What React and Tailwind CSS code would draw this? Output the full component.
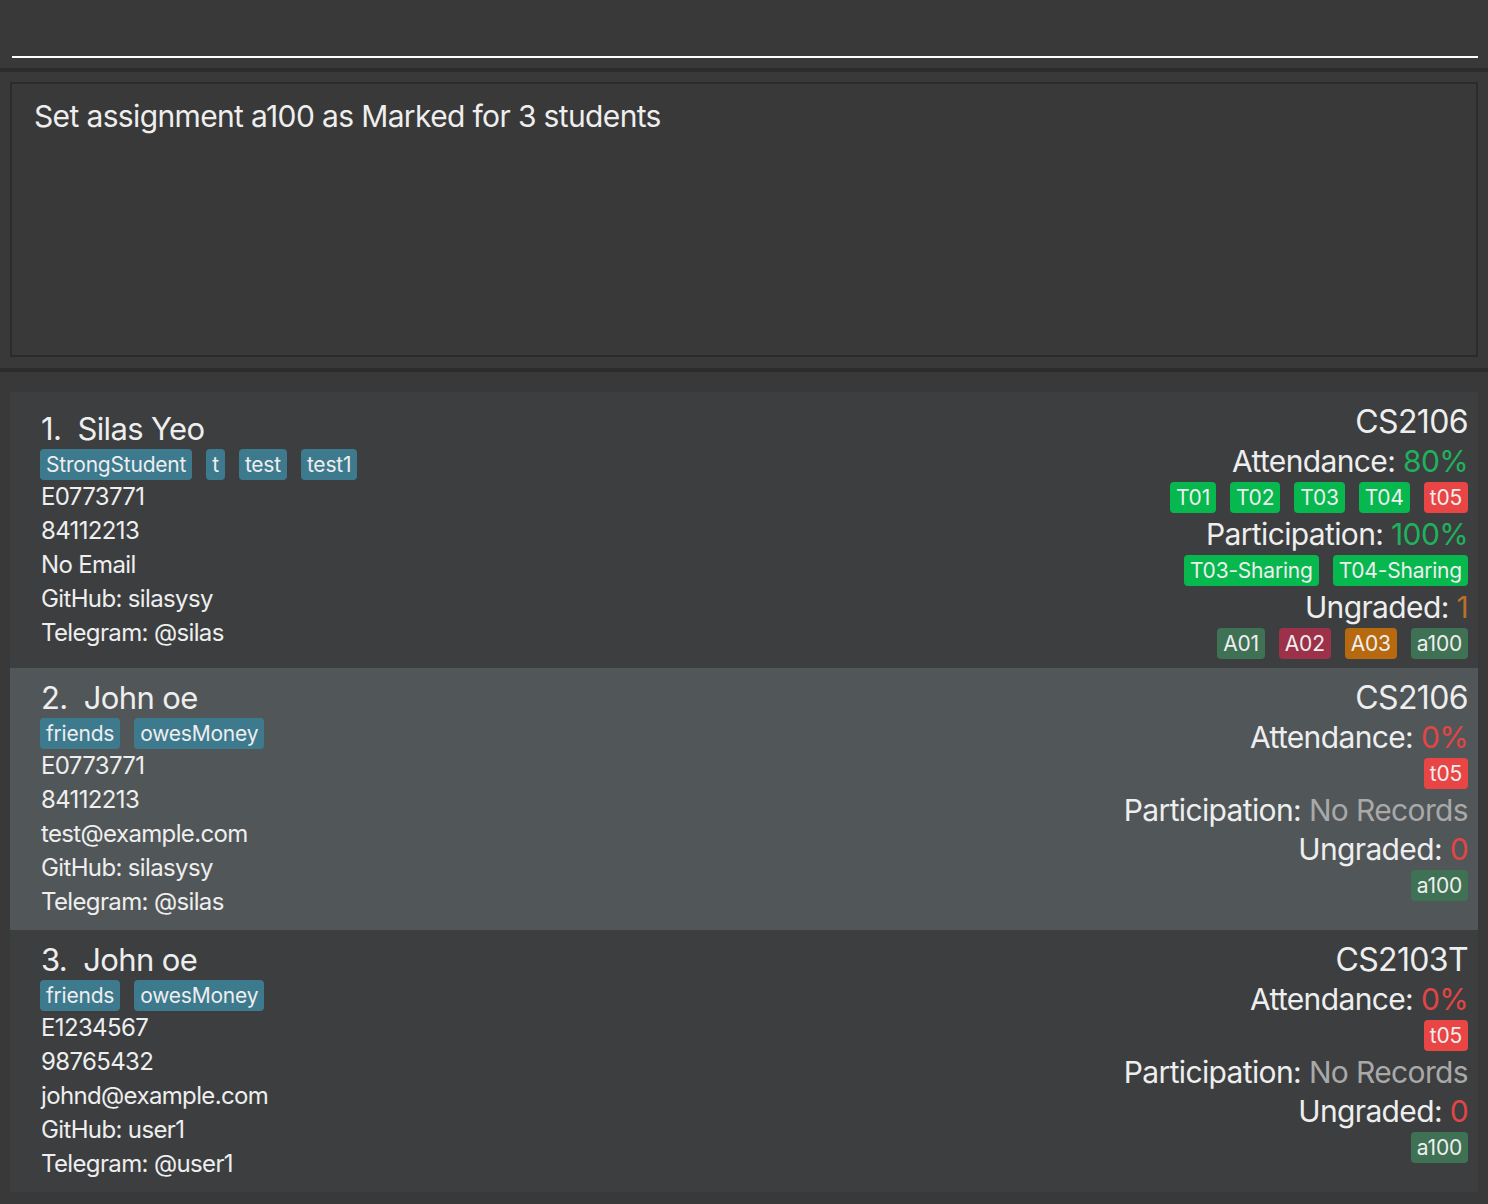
import React from "react";

const students = [
  {
    name: "Silas Yeo",
    tags: ["StrongStudent", "t", "test", "test1"],
    id: "E0773771",
    phone: "84112213",
    email: "No Email",
    github: "silasysy",
    telegram: "@silas",
    course: "CS2106",
    attendance: { value: "80%", good: true },
    attTags: [
      { label: "T01", ok: true },
      { label: "T02", ok: true },
      { label: "T03", ok: true },
      { label: "T04", ok: true },
      { label: "t05", ok: false },
    ],
    participation: { value: "100%", good: true },
    partTags: ["T03-Sharing", "T04-Sharing"],
    ungraded: { value: "1", color: "text-[#b8702a]" },
    assignments: [
      { label: "A01", cls: "bg-[#3f7154]" },
      { label: "A02", cls: "bg-[#9c3149]" },
      { label: "A03", cls: "bg-[#b7690f]" },
      { label: "a100", cls: "bg-[#3f7154]" },
    ],
  },
  {
    name: "John oe",
    tags: ["friends", "owesMoney"],
    id: "E0773771",
    phone: "84112213",
    email: "test@example.com",
    github: "silasysy",
    telegram: "@silas",
    course: "CS2106",
    attendance: { value: "0%", good: false },
    attTags: [{ label: "t05", ok: false }],
    participation: null,
    partTags: [],
    ungraded: { value: "0", color: "text-[#e24545]" },
    assignments: [{ label: "a100", cls: "bg-[#3f7154]" }],
  },
  {
    name: "John oe",
    tags: ["friends", "owesMoney"],
    id: "E1234567",
    phone: "98765432",
    email: "johnd@example.com",
    github: "user1",
    telegram: "@user1",
    course: "CS2103T",
    attendance: { value: "0%", good: false },
    attTags: [{ label: "t05", ok: false }],
    participation: null,
    partTags: [],
    ungraded: { value: "0", color: "text-[#e24545]" },
    assignments: [{ label: "a100", cls: "bg-[#3f7154]" }],
  },
];

const Tag = ({ children, className }) => (
  <span
    className={`h-[31px] px-[6px] rounded-[4px] text-[21px] leading-[31px] tracking-[-0.01em] text-[#eeeeee] ${className}`}
  >
    {children}
  </span>
);

const StudentCard = ({ s, index }) => {
  const even = index % 2 === 1;
  return (
    <div
      className={`flex justify-between pt-3 pb-[9px] pl-[31px] pr-[10px] ${
        even ? "bg-[#515658]" : "bg-[#3c3e40]"
      }`}
    >
      {/* LEFT: details */}
      <div className="self-center flex flex-col pb-[2px] text-[#eeeeee]">
        <div className="text-[31px] leading-[36px] whitespace-pre">
          {index + 1}.  {s.name}
        </div>
        <div className="flex gap-[14px] mt-[2px] -ml-[1px]">
          {s.tags.map((t) => (
            <Tag key={t} className="bg-[#3d7a8e]">
              {t}
            </Tag>
          ))}
        </div>
        <div className="text-[24px] leading-[34px]">
          <div>{s.id}</div>
          <div>{s.phone}</div>
          <div>{s.email}</div>
          <div>GitHub: {s.github}</div>
          <div>Telegram: {s.telegram}</div>
        </div>
      </div>

      {/* RIGHT: course stats */}
      <div className="self-start flex flex-col items-end gap-[3px] text-[#eeeeee] text-[30px] leading-[36px]">
        <div className="text-[32px]">{s.course}</div>
        <div>
          Attendance:{" "}
          <span className={s.attendance.good ? "text-[#1fb25c]" : "text-[#e24545]"}>
            {s.attendance.value}
          </span>
        </div>
        <div className="flex gap-[14px]">
          {s.attTags.map((t) => (
            <Tag key={t.label} className={t.ok ? "bg-[#06b84e]" : "bg-[#ea4545]"}>
              {t.label}
            </Tag>
          ))}
        </div>
        <div>
          Participation:{" "}
          {s.participation ? (
            <span className="text-[#1fb25c]">{s.participation.value}</span>
          ) : (
            <span className="text-[#a9a9a9]">No Records</span>
          )}
        </div>
        {s.partTags.length > 0 && (
          <div className="flex gap-[14px]">
            {s.partTags.map((t) => (
              <Tag key={t} className="bg-[#06b84e]">
                {t}
              </Tag>
            ))}
          </div>
        )}
        <div>
          Ungraded: <span className={s.ungraded.color}>{s.ungraded.value}</span>
        </div>
        <div className="flex gap-[14px]">
          {s.assignments.map((a) => (
            <Tag key={a.label} className={a.cls}>
              {a.label}
            </Tag>
          ))}
        </div>
      </div>
    </div>
  );
};

const App = () => {
  return (
    <div
      className="w-[1488px] h-[1204px] bg-[#393939] overflow-hidden tracking-[-0.04em]"
      style={{ fontFamily: "Inter, 'Noto Sans', sans-serif" }}
    >
      {/* COMMAND BOX */}
      <div className="h-[68px] px-3 pt-[56px]">
        <div className="h-[2px] bg-white w-[1466px]" />
      </div>
      <div className="h-[4px] bg-[#2c2c2c]" />

      {/* RESULT DISPLAY */}
      <div className="px-[10px] pt-[10px] pb-[11px]">
        <div className="h-[275px] border-2 border-[#2b2b2b] bg-[#393939] px-[22px] pt-[12px]">
          <p className="text-[30px] leading-[40px] text-[#eeeeee]">
            Set assignment a100 as Marked for 3 students
          </p>
        </div>
      </div>
      <div className="h-[4px] bg-[#2c2c2c]" />

      {/* STUDENT LIST */}
      <div className="px-[10px] pt-[20px]">
        {students.map((s, i) => (
          <StudentCard key={i} s={s} index={i} />
        ))}
      </div>
    </div>
  );
};

export default App;
